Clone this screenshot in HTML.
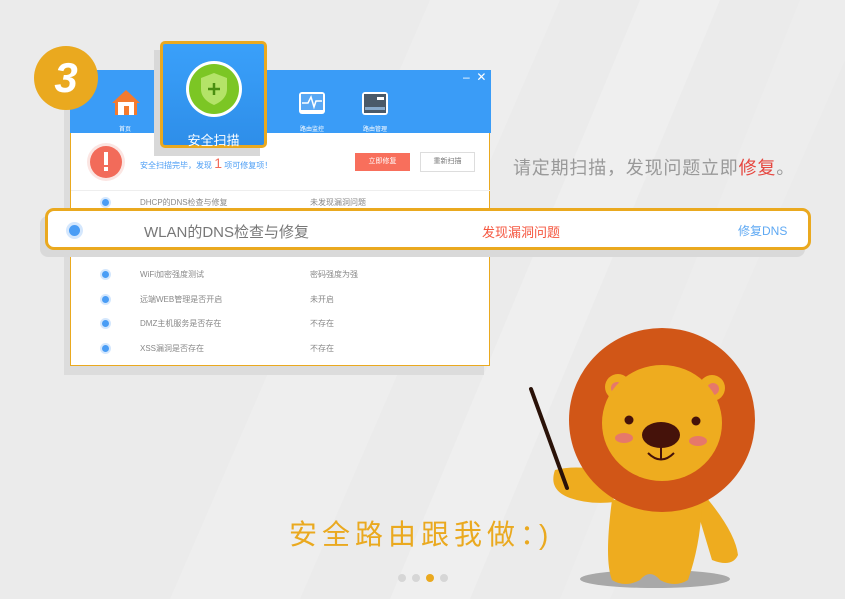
<!DOCTYPE html>
<html><head><meta charset="utf-8"><style>
*{margin:0;padding:0;box-sizing:border-box}
body{width:845px;height:599px;overflow:hidden;background:#ebebeb;position:relative;font-family:"Liberation Sans","Noto Sans CJK SC",sans-serif}
.abs{position:absolute}
.row{position:absolute;left:0;width:420px;height:25px;font-size:8px;color:#888}
.row .d{position:absolute;left:31px;top:9px;width:7px;height:7px;border-radius:50%;background:#4a9df5;box-shadow:0 0 0 2px #d4e7fd}
.row .a{position:absolute;left:69px;top:7px}
.row .b{position:absolute;left:239px;top:7px}
</style></head><body>
<svg class="abs" style="left:0;top:0" width="845" height="599">
<polygon points="430,0 560,0 300,599 170,599" fill="#eeeeee"/>
<polygon points="640,0 720,0 470,599 390,599" fill="#efefef"/>
<polygon points="800,0 845,0 845,60 610,599 560,599" fill="#ededed"/>
</svg>
<div class="abs" style="left:64px;top:80px;width:420px;height:295px;background:#dcdcdc"></div>
<div class="abs" style="left:70px;top:70px;width:420px;height:296px;background:#fff;border:1px solid #eaa91f;border-top:none">
 <div class="abs" style="left:-1px;top:0;width:421px;height:63px;background:#3a9cf7"></div>
 <div class="abs" style="left:392px;top:0;color:#fff;font-size:12px">–&nbsp;&nbsp;✕</div>
 <svg class="abs" style="left:40px;top:18px" width="30" height="28"><polygon points="15,2 29,15 26,15 26,27 4,27 4,15 1,15" fill="#f47a2e"/><rect x="7" y="14" width="16" height="13" fill="#fff"/><rect x="13" y="18" width="5" height="9" fill="#f47a2e"/></svg>
 <div class="abs" style="left:48px;top:54px;font-size:6px;color:#fff">首页</div>
 <svg class="abs" style="left:227px;top:21px" width="28" height="26"><rect x="1" y="1" width="26" height="22" rx="3" fill="#fff"/><rect x="3" y="3" width="22" height="16" fill="#5aa8f4"/><polyline points="4,12 10,12 13,6 16,16 18,10 24,10" fill="none" stroke="#fff" stroke-width="1.5"/></svg>
 <div class="abs" style="left:229px;top:54px;font-size:6px;color:#fff">路由监控</div>
 <svg class="abs" style="left:290px;top:21px" width="28" height="26"><rect x="1" y="1" width="26" height="23" rx="3" fill="#fff"/><rect x="3" y="3" width="22" height="19" fill="#4a5a6a"/><rect x="16" y="6" width="7" height="3" fill="#fff"/><rect x="4" y="16" width="20" height="3" fill="#8ac"/></svg>
 <div class="abs" style="left:292px;top:54px;font-size:6px;color:#fff">路由管理</div>
 <svg class="abs" style="left:15px;top:72px" width="40" height="40"><circle cx="20" cy="20" r="19" fill="#fbe5e2"/><circle cx="20" cy="20" r="16" fill="#f26b5a"/><rect x="18" y="10" width="4" height="13" fill="#fff"/><rect x="18" y="25" width="4" height="4" fill="#fff"/></svg>
 <div class="abs" style="left:69px;top:85px;font-size:8px;color:#4a9df5">安全扫描完毕，发现 <span style="color:#f26b5a;font-size:14px">1</span> 项可修复项！</div>
 <div class="abs" style="left:284px;top:83px;width:55px;height:18px;background:#f86f5c;color:#fff;font-size:7px;text-align:center;line-height:18px">立即修复</div>
 <div class="abs" style="left:349px;top:82px;width:55px;height:20px;border:1px solid #ddd;color:#777;font-size:7px;text-align:center;line-height:18px">重新扫描</div>
 <div class="abs" style="left:0;top:120px;width:419px;height:1px;background:#eee"></div>
 <div class="row" style="top:120px"><span class="d"></span><span class="a">DHCP的DNS检查与修复</span><span class="b">未发现漏洞问题</span></div>
 <div class="row" style="top:168px"><span class="d"></span><span class="a">路由密码强度检查</span><span class="b">密码强度为强</span></div>
 <div class="row" style="top:192px"><span class="d"></span><span class="a">WiFi加密强度测试</span><span class="b">密码强度为强</span></div>
 <div class="row" style="top:217px"><span class="d"></span><span class="a">远端WEB管理是否开启</span><span class="b">未开启</span></div>
 <div class="row" style="top:241px"><span class="d"></span><span class="a">DMZ主机服务是否存在</span><span class="b">不存在</span></div>
 <div class="row" style="top:266px"><span class="d"></span><span class="a">XSS漏洞是否存在</span><span class="b">不存在</span></div>
</div>
<div class="abs" style="left:154px;top:50px;width:106px;height:106px;background:#d8d8d8"></div>
<div class="abs" style="left:160px;top:41px;width:107px;height:107px;border:3px solid #eaa91f;border-radius:5px;background:linear-gradient(#3aa0fa,#2e8ee9)">
 <svg class="abs" style="left:22px;top:16px" width="58" height="58"><circle cx="29" cy="29" r="28" fill="#fff"/><circle cx="29" cy="29" r="25" fill="#7cc624"/><path d="M29 13 L42 18 V29 C42 37 36 42 29 45 C22 42 16 37 16 29 V18 Z" fill="#b4e368"/><path d="M29 23v12M23 29h12" stroke="#4a8f10" stroke-width="2.5"/></svg>
 <div class="abs" style="left:0;width:101px;top:86px;text-align:center;color:#fff;font-size:13px">安全扫描</div>
</div>
<div class="abs" style="left:34px;top:46px;width:64px;height:64px;border-radius:50%;background:#eaa91f;color:#fff;font-size:42px;font-weight:bold;font-style:italic;text-align:center;line-height:64px">3</div>
<div class="abs" style="left:40px;top:216px;width:765px;height:41px;background:#d9d9d9;border-radius:8px"></div>
<div class="abs" style="left:45px;top:208px;width:766px;height:42px;background:#fff;border:3px solid #eaa91f;border-radius:9px">
 <div class="abs" style="left:21px;top:14px;width:11px;height:11px;border-radius:50%;background:#4a9df5;box-shadow:0 0 0 3px #d4e7fd"></div>
 <div class="abs" style="left:96px;top:10px;font-size:15px;color:#777">WLAN的DNS检查与修复</div>
 <div class="abs" style="left:434px;top:11px;font-size:13px;color:#f5563f">发现漏洞问题</div>
 <div class="abs" style="left:690px;top:11px;font-size:12px;color:#5fa9f3">修复DNS</div>
</div>
<div class="abs" style="left:513px;top:154px;font-size:18px;color:#999;letter-spacing:0.8px">请定期扫描，发现问题立即<span style="color:#e6463f">修复</span>。</div>
<div class="abs" style="left:289px;top:513px;font-size:28px;color:#eaa91f;letter-spacing:5px">安全路由跟我做：)</div>
<svg class="abs" style="left:0;top:0" width="845" height="599">
<circle cx="402" cy="578" r="4" fill="#d6d6d6"/><circle cx="416" cy="578" r="4" fill="#d6d6d6"/><circle cx="430" cy="578" r="4" fill="#eaa91f"/><circle cx="444" cy="578" r="4" fill="#d6d6d6"/>
<ellipse cx="655" cy="579" rx="75" ry="9" fill="#a8a8a8"/>
<path d="M700 490 Q735 530 738 555 Q732 568 712 560 L700 520 Z" fill="#eeac1f"/>
<path d="M612 500 Q604 560 612 580 Q625 588 640 580 Q650 568 660 580 Q675 588 688 580 Q702 540 702 495 Z" fill="#eeac1f"/>
<path d="M600 470 Q575 465 555 470 Q548 490 570 498 Q590 505 615 502 Z" fill="#eeac1f"/>
<ellipse cx="662" cy="420" rx="93" ry="92" fill="#d15617"/>
<circle cx="618" cy="387" r="13" fill="#eeac1f"/><circle cx="712" cy="388" r="13" fill="#eeac1f"/>
<circle cx="617" cy="388" r="6" fill="#e6786a"/><circle cx="713" cy="389" r="6" fill="#e6786a"/>
<ellipse cx="662" cy="423" rx="60" ry="58" fill="#eeac1f"/>
<circle cx="629" cy="420" r="4.5" fill="#45120a"/><circle cx="696" cy="421" r="4.5" fill="#45120a"/>
<ellipse cx="624" cy="438" rx="9" ry="5" fill="#e6786a"/><ellipse cx="698" cy="441" rx="9" ry="5" fill="#e6786a"/>
<ellipse cx="661" cy="435" rx="19" ry="13" fill="#45120a"/>
<path d="M648 453 Q661 466 674 453 M661 446 V460" fill="none" stroke="#45120a" stroke-width="2"/>
<line x1="531" y1="389" x2="567" y2="488" stroke="#2a1208" stroke-width="4" stroke-linecap="round"/>
</svg>
</body></html>
